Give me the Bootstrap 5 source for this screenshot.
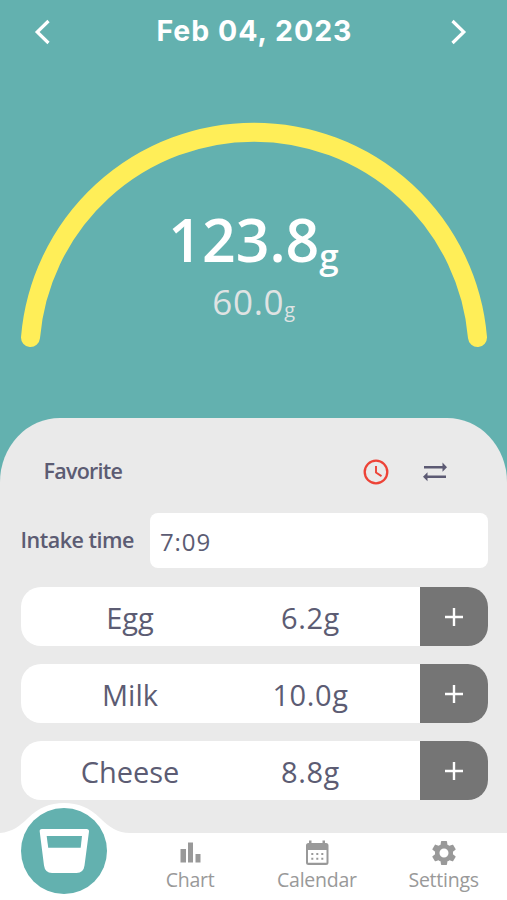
<!DOCTYPE html>
<html lang="en">
<head>
<meta charset="utf-8">
<meta name="viewport" content="width=device-width, initial-scale=1">
<title>Protein intake</title>
<link href="https://cdn.jsdelivr.net/npm/bootstrap@5.3.0/dist/css/bootstrap.min.css" rel="stylesheet">
<style>
  body { font-family: "Open Sans", "Noto Sans", sans-serif; color: #5c5c73; background: #63b1af; }
  .screen { width: 507px; height: 900px; }
  .topbar { height: 63px; padding: 0 40px 0 34px; }
  .topbar h1 { font: 700 28.5px/1 Inter, sans-serif; letter-spacing: 1px; padding-left: 8px; }
  .gauge { height: 354.5px; }
  .gauge-arc { top: 0; left: 0; }
  .readout { padding-top: 151px; line-height: 1; }
  .total { font-size: 59px; font-weight: 600; height: 60px; line-height: 50px; }
  .total span { display: inline-block; font-size: 35px; line-height: 35px; transform: translateY(7px); }
  .goal { font-size: 35px; color: #dfe3e3; letter-spacing: .7px; height: 46px; line-height: 55px; padding-left: 1px; }
  .goal span { display: inline-block; font-size: 20px; line-height: 20px; transform: translateY(2px); }
  .sheet { height: 415.5px; background: #eaeaea; border-radius: 60px 60px 0 0 / 64px 64px 0 0; padding: 25px 19.5px 0 20.5px; }
  .sheet-head { height: 58px; padding: 0 40px 0 23px; }
  .tag { font-size: 21.5px; font-weight: 600; letter-spacing: -.75px; white-space: nowrap; }
  .time-row { margin-top: 12px; }
  .time-label { width: 129.5px; letter-spacing: -.5px; }
  .time-box { height: 55px; border-radius: 8px; font-size: 24px; letter-spacing: .9px; padding: 3px 0 0 10px; }
  .foods { margin-top: 19px; gap: 18px; }
  .food { height: 59px; border-radius: 20px; font-size: 29px; }
  .food-name { width: 219px; padding-top: 3px; }
  .food-value { width: 142px; letter-spacing: .6px; padding-top: 3px; }
  .add { width: 67.5px; height: 59px; background: #757575; }
  .tabs { height: 67px; }
  .tab { color: #999; font-size: 19.5px; line-height: 24px; letter-spacing: -.25px; padding-top: 5px; }
  .tab-bump { left: 0; top: -31px; }
</style>
</head>
<body>
<div class="screen d-flex flex-column overflow-hidden">
  <header class="topbar d-flex align-items-center justify-content-between">
    <svg width="18" height="26" viewBox="0 0 18 26" fill="none" stroke="#fff" stroke-width="3.200"><path d="M14.500 2 3.200 13l11.300 11"/></svg>
    <h1 class="mb-0 text-white">Feb 04, 2023</h1>
    <svg width="18" height="26" viewBox="0 0 18 26" fill="none" stroke="#fff" stroke-width="3.200"><path d="m3.500 2 11.300 11L3.500 24"/></svg>
  </header>

  <section class="gauge position-relative text-center">
    <svg class="gauge-arc position-absolute" width="507" height="300" fill="none"><path d="M30.500 274.500A224.300 224.300 0 0 1 477.500 274.500" stroke="#ffee58" stroke-width="19" stroke-linecap="round"/></svg>
    <div class="readout">
      <div class="total text-white">123.8<span>g</span></div>
      <div class="goal">60.0<span>g</span></div>
    </div>
  </section>

  <main class="sheet">
    <div class="sheet-head d-flex align-items-center">
      <span class="tag me-auto">Favorite</span>
      <svg class="me-4" width="28" height="28" viewBox="0 0 28 28" fill="none" stroke="#ed4337" stroke-width="2.300"><circle cx="14" cy="14" r="11.300"/><path d="M14 8v6.500l5.500 3.600" stroke-width="1.900"/></svg>
      <svg class="ms-2" width="26" height="22" viewBox="0 0 26 22" fill="#5c5a73"><path d="M2 5h18.500V1.500L25 6.200l-4.500 4.500V7.500H2zM24 14.500H5.500v-3.200L1 15.800l4.500 4.500V17H24z"/></svg>
    </div>
    <div class="time-row d-flex align-items-center">
      <label class="tag time-label">Intake time</label>
      <div class="time-box bg-white flex-grow-1 d-flex align-items-center">7:09</div>
    </div>
    <div class="foods d-flex flex-column">
      <div class="food bg-white d-flex align-items-center overflow-hidden text-center">
        <span class="food-name">Egg</span><span class="food-value">6.2g</span>
        <button class="add ms-auto border-0 p-0 d-flex align-items-center justify-content-center" aria-label="Add egg"><svg width="18" height="19" stroke="#fff" stroke-width="2.400"><path d="M9 1v18M0 10h18"/></svg></button>
      </div>
      <div class="food bg-white d-flex align-items-center overflow-hidden text-center">
        <span class="food-name">Milk</span><span class="food-value">10.0g</span>
        <button class="add ms-auto border-0 p-0 d-flex align-items-center justify-content-center" aria-label="Add milk"><svg width="18" height="19" stroke="#fff" stroke-width="2.400"><path d="M9 1v18M0 10h18"/></svg></button>
      </div>
      <div class="food bg-white d-flex align-items-center overflow-hidden text-center">
        <span class="food-name">Cheese</span><span class="food-value">8.8g</span>
        <button class="add ms-auto border-0 p-0 d-flex align-items-center justify-content-center" aria-label="Add cheese"><svg width="18" height="19" stroke="#fff" stroke-width="2.400"><path d="M9 1v18M0 10h18"/></svg></button>
      </div>
    </div>
  </main>

  <nav class="tabs row g-0 bg-white position-relative">
    <div class="col-3">
      <svg class="tab-bump position-absolute" width="134" height="98" viewBox="0 0 134 98">
        <path d="M0 31C12 30 20 24 28 16C38 6 50 1 64 1S90 6 100 16C109 25 118 31 130 31V98H0z" fill="#fff"/>
        <circle cx="64" cy="49" r="43" fill="#63b1af"/>
        <path d="M42 27h44.500q2.700 0 2.500 2.600l-4.500 34q-.9 7.400-8 7.400h-24.500q-7 0-8-7.400l-4.300-34Q39.300 27 42 27z" fill="#fff"/>
        <path d="M46.700 34h35.300l-1.300 11.800H48.200z" fill="#63b1af"/>
      </svg>
    </div>
    <div class="col-3 tab d-flex flex-column align-items-center">
      <svg width="30" height="30" fill="#999"><path d="M5.500 11h5.500v13.500H5.500zM13 4.500h5v20h-5zM20.500 16h5v8.500h-5z"/></svg>
      <span>Chart</span>
    </div>
    <div class="col-3 tab d-flex flex-column align-items-center">
      <svg width="30" height="30"><path fill="#999" fill-rule="evenodd" d="M7 2.500h2.500V5h11V2.500H23V5h1q2.500 0 2.500 2.500v17Q26.500 27 24 27H6.500Q4 27 4 24.500v-17Q4 5 6.500 5H7zM6 12v12.700h18.500V12z"/><path fill="#999" d="M9.300 15h2v2h-2zm5 0h2v2h-2zm5 0h2v2h-2zm-10 4.800h2v2h-2zm5 0h2v2h-2zm5 0h2v2h-2z"/></svg>
      <span>Calendar</span>
    </div>
    <div class="col-3 tab d-flex flex-column align-items-center">
      <svg width="30" height="30" viewBox="0 0 24 24" fill="#999"><path d="M19.140 12.940c.04-.3.060-.61.060-.94 0-.32-.02-.64-.07-.94l2.030-1.580c.18-.14.230-.41.120-.61l-1.920-3.320c-.12-.22-.37-.29-.59-.22l-2.390.96c-.5-.38-1.030-.7-1.620-.94l-.36-2.540c-.04-.24-.24-.41-.48-.41h-3.840c-.24 0-.43.170-.47.410l-.36 2.540c-.59.240-1.130.570-1.620.940l-2.390-.96c-.22-.08-.47 0-.59.220L2.740 8.870c-.12.210-.08.470.120.610l2.030 1.580c-.05.300-.09.630-.09.940s.02.640.070.940l-2.030 1.580c-.18.140-.23.410-.12.610l1.920 3.320c.12.220.370.290.590.220l2.390-.96c.5.380 1.030.7 1.620.94l.36 2.540c.05.240.240.410.480.410h3.840c.24 0 .44-.17.470-.41l.36-2.540c.59-.24 1.130-.56 1.620-.94l2.390.96c.22.080.470 0 .59-.22l1.920-3.320c.12-.22.070-.47-.12-.61zM12 15.600a3.600 3.600 0 1 1 0-7.200 3.600 3.600 0 0 1 0 7.200z"/></svg>
      <span>Settings</span>
    </div>
  </nav>
</div>
<script src="https://cdn.jsdelivr.net/npm/bootstrap@5.3.0/dist/js/bootstrap.bundle.min.js"></script>
</body>
</html>
